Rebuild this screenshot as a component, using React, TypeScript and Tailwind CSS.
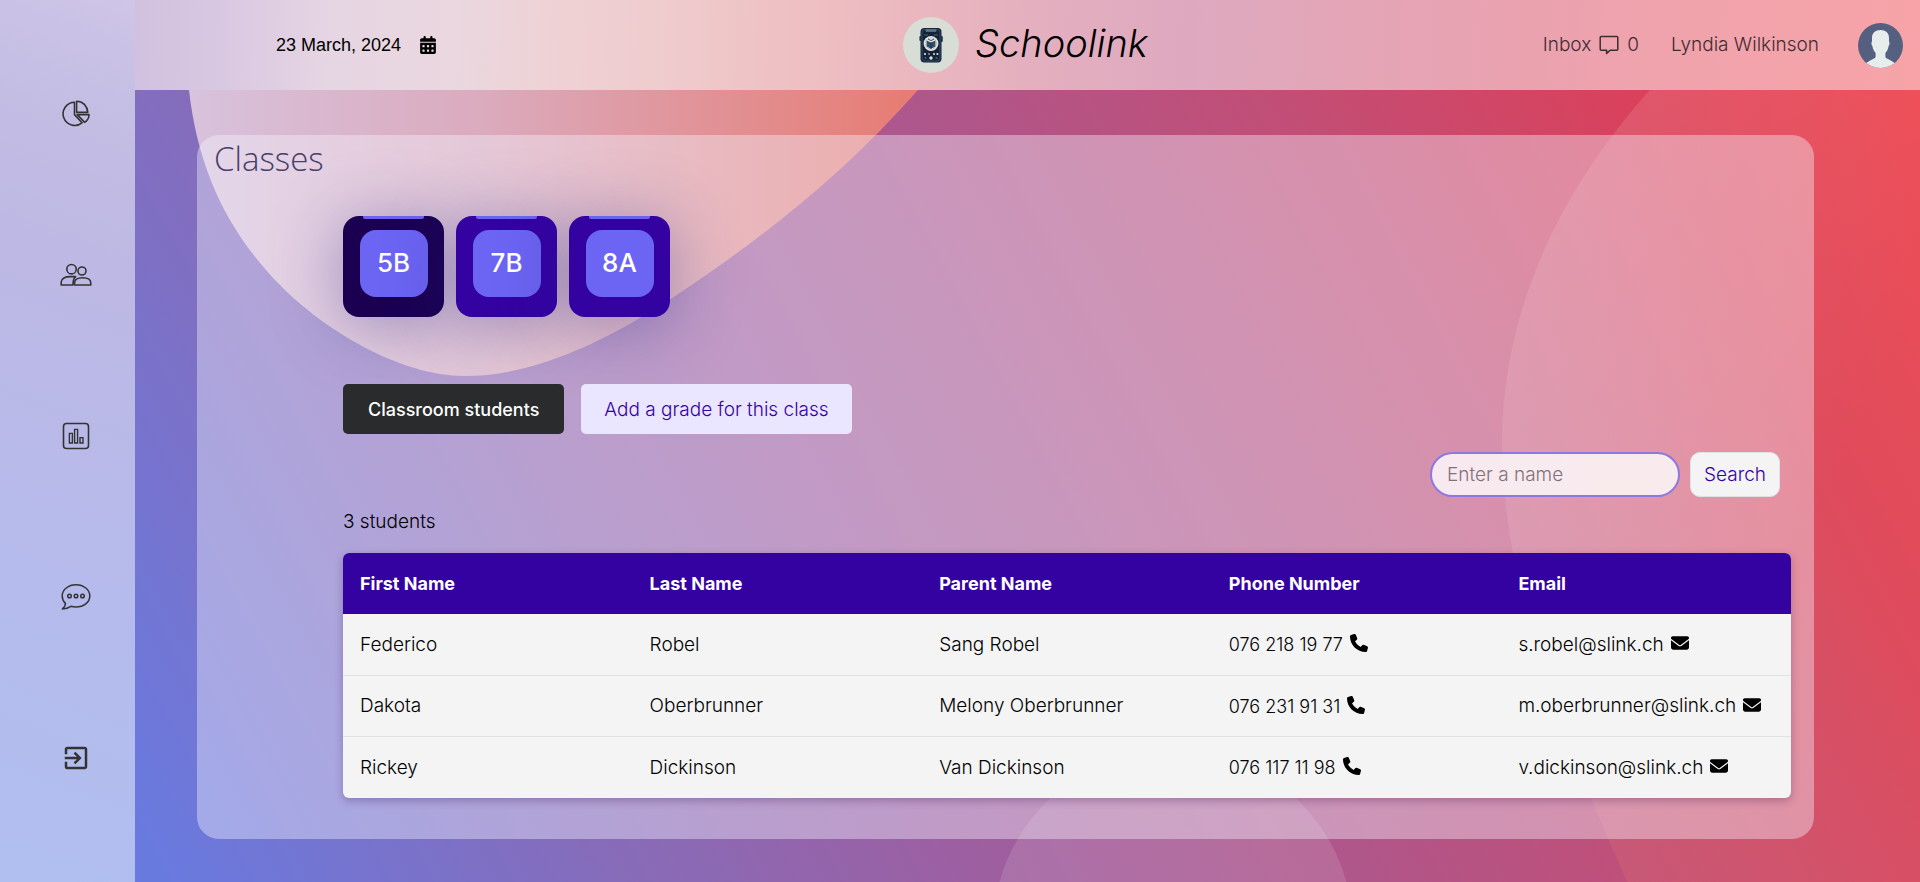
import { useState } from 'react';
import { FaCalendarDays, FaEnvelope, FaPhone } from 'react-icons/fa6';
import { MdExitToApp } from 'react-icons/md';

type Student = { first: string; last: string; parent: string; phone: string; email: string };

const students: Student[] = [
  { first: 'Federico', last: 'Robel', parent: 'Sang Robel', phone: '076 218 19 77', email: 's.robel@slink.ch' },
  { first: 'Dakota', last: 'Oberbrunner', parent: 'Melony Oberbrunner', phone: '076 231 91 31', email: 'm.oberbrunner@slink.ch' },
  { first: 'Rickey', last: 'Dickinson', parent: 'Van Dickinson', phone: '076 117 11 98', email: 'v.dickinson@slink.ch' },
];

const columns = ['First Name', 'Last Name', 'Parent Name', 'Phone Number', 'Email'];

function Backdrop() {
  return (
    <svg
      className="absolute inset-0 h-full w-full"
      viewBox="0 0 1920 882"
      preserveAspectRatio="none"
      aria-hidden="true"
    >
      <defs>
        <linearGradient id="petal" gradientUnits="userSpaceOnUse" x1="190" y1="0" x2="930" y2="0">
          <stop offset="0" stopColor="#d8c2dc" />
          <stop offset="0.4" stopColor="#dbaabd" />
          <stop offset="1" stopColor="#e77a70" />
        </linearGradient>
        <linearGradient id="wave" gradientUnits="userSpaceOnUse" x1="1500" y1="100" x2="1920" y2="300">
          <stop offset="0" stopColor="#fff" stopOpacity="0.13" />
          <stop offset="1" stopColor="#ff8a60" stopOpacity="0.14" />
        </linearGradient>
      </defs>
      <path
        d="M187 0 L189 90 C198 170 228 232 280 285 C324 330 400 376 465 376 C530 376 600 345 669 300 C760 240 840 178 918 90 L990 0 Z"
        fill="url(#petal)"
      />
      <path
        d="M1760 0 C1715 25 1680 55 1650 90 C1560 190 1503 310 1502 440 C1502 590 1565 740 1627 882 L1920 882 L1920 0 Z"
        fill="url(#wave)"
      />
      <circle cx="1173" cy="930" r="180" fill="#fff" fillOpacity="0.12" />
    </svg>
  );
}

function PieIcon() {
  return (
    <svg width="30" height="30" viewBox="0 0 30 30" fill="none" stroke="currentColor" strokeWidth="1.6" strokeLinejoin="round">
      <path d="M13.5 3.2 A11.6 11.6 0 1 0 21 23.8 L13.5 15.6 Z" />
      <path d="M15.6 2.2 C22 2.2 26.2 6.8 26.8 13.4 H15.6 Z" />
      <path d="M16.2 15.6 H28 C28 19 26.4 21.8 23.6 23.4 Z" />
    </svg>
  );
}

function UsersIcon() {
  return (
    <svg width="32" height="24" viewBox="0 0 32 24" fill="none" stroke="currentColor" strokeWidth="1.6" strokeLinejoin="round">
      <circle cx="11.5" cy="6.2" r="4.7" />
      <circle cx="22" cy="8" r="4" />
      <path d="M13 22 H1.2 V19 C1.2 15.5 5.5 13.6 10 13.6 H15.6 C13.6 15.4 13 18 13 22 Z" />
      <path d="M14.5 22 V20 C14.5 16.6 18 14.8 22.8 14.8 C27.6 14.8 30.8 16.6 30.8 20 V22 Z" />
    </svg>
  );
}

function BarsIcon() {
  return (
    <svg width="30" height="30" viewBox="0 0 30 30" fill="none" stroke="currentColor" strokeWidth="1.6">
      <rect x="2.5" y="2.5" width="25" height="25" rx="3" />
      <path d="M8.4 12.4 h3 v9.6 h-3 Z M13.6 8.4 h3 v13.6 h-3 Z M19 16.6 h3 v5.4 h-3 Z" strokeWidth="1.4" />
    </svg>
  );
}

function ChatIcon() {
  return (
    <svg width="30" height="28" viewBox="0 0 30 28" fill="none" stroke="currentColor" strokeWidth="1.5" strokeLinejoin="round">
      <path d="M15 1.8 C22.6 1.8 28.8 6.6 28.8 13 C28.8 19.4 22.6 24 15 24 C13.2 24 11.4 23.8 10 23.3 C7.4 25 4.4 25.9 1.4 25.9 C3.6 24 4.6 22.4 4.4 20.4 C2.4 18.4 1.2 16 1.2 13 C1.2 6.6 7.4 1.8 15 1.8 Z" />
      <circle cx="8.5" cy="13" r="1.8" />
      <circle cx="15" cy="13" r="1.8" />
      <circle cx="21.5" cy="13" r="1.8" />
    </svg>
  );
}

function InboxIcon() {
  return (
    <svg width="20" height="20" viewBox="0 0 20 20" fill="none" stroke="currentColor" strokeWidth="1.5" strokeLinejoin="round">
      <path d="M2.2 1.6 H17.8 Q18.8 1.6 18.8 2.6 V14.2 Q18.8 15.2 17.8 15.2 H11.2 L7.6 18.4 V15.2 H2.2 Q1.2 15.2 1.2 14.2 V2.6 Q1.2 1.6 2.2 1.6 Z" />
    </svg>
  );
}

function Logo() {
  return (
    <svg width="56" height="56" viewBox="0 0 56 56" role="img" aria-label="Schoolink logo">
      <circle cx="28" cy="28" r="28" fill="#d8ddd5" />
      <rect x="16.4" y="19" width="2" height="5" rx="1" fill="#26384e" />
      <rect x="37.8" y="19" width="2" height="6" rx="1" fill="#26384e" />
      <rect x="17.5" y="11" width="21" height="34.5" rx="4" fill="#12233a" />
      <rect x="19" y="12.5" width="18" height="31.5" rx="3" fill="none" stroke="#41566c" strokeWidth="0.8" />
      <path d="M23 12.5 h10 v2 h-10 Z M21 18 h4 M31 18 h4" fill="#5b7186" stroke="#5b7186" strokeWidth="0.8" />
      <circle cx="28" cy="26.5" r="7.4" fill="#e6e6dc" />
      <circle cx="28" cy="26.5" r="5.6" fill="none" stroke="#8895a0" strokeWidth="0.6" strokeDasharray="1.5 1" />
      <path d="M23.6 23.4 L28 25.4 L32.4 23.4 V29.6 L28 31.8 L23.6 29.6 Z" fill="#2f4d6b" />
      <path d="M28 25.4 V31.8 M25 22 l3 1.6 l3 -1.6" stroke="#12233a" strokeWidth="0.8" fill="none" />
      <g fill="#dfe3dc">
        <circle cx="22" cy="37" r="1.1" />
        <circle cx="26" cy="37" r="0.8" />
        <circle cx="31" cy="37" r="1" />
        <circle cx="34.4" cy="37" r="1.1" />
        <circle cx="28" cy="41" r="1.7" />
      </g>
      <circle cx="22.5" cy="41" r="1.1" fill="#4a6075" />
      <circle cx="33.5" cy="41" r="1.1" fill="#4a6075" />
    </svg>
  );
}

function Avatar() {
  return (
    <svg width="45" height="45" viewBox="0 0 45 45" role="img" aria-label="Lyndia Wilkinson">
      <defs>
        <clipPath id="round">
          <circle cx="22.5" cy="22.5" r="22.5" />
        </clipPath>
      </defs>
      <g clipPath="url(#round)">
        <rect width="45" height="45" fill="#556080" />
        <path
          d="M22.5 7 C27.6 7 31 10 31 14.5 V18.5 C32 19.6 31.6 22 30.6 23 C30.2 26.4 28.6 28.4 27.4 30 V34 C28.4 36 33.5 37.4 37.5 40.5 V45 H7.5 V40.5 C11.5 37.4 16.6 36 17.6 34 V30 C16.4 28.4 14.8 26.4 14.4 23 C13.4 22 13 19.6 14 18.5 V14.5 C14 10 17.4 7 22.5 7 Z"
          fill="#e7eced"
        />
      </g>
    </svg>
  );
}

const navItems = [
  { label: 'Dashboard', icon: <PieIcon /> },
  { label: 'Classes', icon: <UsersIcon /> },
  { label: 'Grades', icon: <BarsIcon /> },
  { label: 'Messages', icon: <ChatIcon /> },
  { label: 'Log out', icon: <MdExitToApp size={30} /> },
];

export default function App() {
  const [activeClass, setActiveClass] = useState('5B');
  const [query, setQuery] = useState('');

  return (
    <div className="relative flex min-h-screen bg-[linear-gradient(62deg,#6679e2_0%,#697adf_7%,#886bb8_27%,#9d5fa1_41%,#b0568a_57%,#c24e76_71%,#da415b_86%,#ee4452_100%)] font-['Inter','Liberation_Sans',sans-serif] text-[19px] font-light text-black">
      <Backdrop />

      <nav
        aria-label="Main"
        className="relative flex w-[135px] shrink-0 flex-col bg-[linear-gradient(20deg,#b0bff0_0%,#b5bbec_35%,#bdb8e4_68%,#c3bde4_85%,#cec5e7_100%)] pt-[34px] pb-11"
      >
        {navItems.map((item) => (
          <a
            key={item.label}
            href="#"
            aria-label={item.label}
            className="flex flex-1 items-center justify-center pl-4 text-[#333]"
          >
            {item.icon}
          </a>
        ))}
      </nav>

      <div className="relative flex min-w-0 flex-1 flex-col">
        <header className="grid h-[90px] grid-cols-3 items-center bg-[linear-gradient(92deg,#d1c1df_0%,#d9c8e1_5%,#e6d5e3_11%,#ead7df_18%,#efd1d4_24%,#efcbcd_30%,#eec0c3_37%,#ebb8c0_43%,#e4b0bf_50%,#dea9bf_59%,#e2a6b8_66%,#eaa2b0_77%,#f0a3ac_86%,#f7a3a8_100%)]">
          <div className="flex items-center gap-[18px] pl-[141px] font-['Liberation_Sans',Arial,sans-serif] text-lg">
            <span>23 March, 2024</span>
            <FaCalendarDays size={18} />
          </div>
          <div className="flex items-center justify-center gap-4 pr-1">
            <Logo />
            <span className="pb-1 text-[38px] leading-[46px] italic">Schoolink</span>
          </div>
          <div className="flex items-center justify-end pr-[17px] text-[#3f2c33]">
            <a href="#" className="flex items-center gap-2">
              Inbox <InboxIcon /> 0
            </a>
            <span className="ml-8">Lyndia Wilkinson</span>
            <span className="ml-[39px]">
              <Avatar />
            </span>
          </div>
        </header>

        <main className="mt-[45px] mr-[106px] mb-[43px] ml-[62px] flex-1 rounded-[22px] bg-[#f5f5ff]/40">
          <h1 className="px-[17px] pt-[3px] font-['Open_Sans','Noto_Sans',sans-serif] text-[33px] leading-[42px] font-light text-[#47406b]">
            Classes
          </h1>

          <div className="pr-[23px] pl-[146px]">
            <div className="mt-9 flex gap-3">
              {['5B', '7B', '8A'].map((name) => (
                <button
                  key={name}
                  type="button"
                  onClick={() => setActiveClass(name)}
                  className={`flex h-[101px] w-[101px] flex-col items-center rounded-2xl shadow-[0_8px_70px_rgba(31,38,135,0.4)] ${
                    activeClass === name ? 'bg-[#1b0052]' : 'bg-[#3502a2]'
                  }`}
                >
                  <span className="h-[3px] w-[61px] rounded-b-xs bg-[#6c63f0]" />
                  <span className="mt-[11px] flex h-[67px] w-[68px] items-center justify-center rounded-2xl bg-[#6c64f2] pb-[2px] text-[26px] font-medium text-white">
                    {name}
                  </span>
                </button>
              ))}
            </div>

            <div className="mt-[67px] flex gap-[17px]">
              <button type="button" className="h-[50px] rounded-[5px] bg-[#292b2c] px-[25px] pt-[2px] text-lg font-medium text-white">
                Classroom students
              </button>
              <button type="button" className="h-[50px] rounded-[5px] bg-[#eae6ff] px-[23px] pt-[2px] text-[#3502a2]">
                Add a grade for this class
              </button>
            </div>

            <form className="mt-[18px] mr-[11px] flex justify-end gap-[10px]" onSubmit={(e) => e.preventDefault()}>
              <input
                type="search"
                aria-label="Enter a name"
                placeholder="Enter a name"
                value={query}
                onChange={(e) => setQuery(e.target.value)}
                className="h-[45px] w-[250px] rounded-full border-2 border-[#8c78e0] bg-white/80 px-[15px] outline-none placeholder:text-[#83717a]"
              />
              <button type="submit" className="h-[45px] rounded-[10px] border border-[#dee2e6] bg-[#f4f4f4] px-[13px] pt-[2px] text-[#3502a2]">
                Search
              </button>
            </form>

            <p className="mt-3 leading-[26px]">3 students</p>

            <table className="mt-[18px] w-full table-fixed overflow-hidden rounded-md bg-[#f4f4f4] text-left shadow-[0_3px_8px_rgba(60,20,80,0.3)]">
              <thead className="bg-[#3502a2] text-lg text-white">
                <tr>
                  {columns.map((c) => (
                    <th key={c} scope="col" className="h-[61px] px-[17px] font-bold">
                      {c}
                    </th>
                  ))}
                </tr>
              </thead>
              <tbody>
                {students.map((s) => (
                  <tr key={s.email} className="h-[61px] border-b border-[#dee2e6] last:h-[62px] last:border-b-0">
                    <td className="px-[17px] pt-[2px]">{s.first}</td>
                    <td className="px-[17px] pt-[2px]">{s.last}</td>
                    <td className="px-[17px] pt-[2px]">{s.parent}</td>
                    <td className="px-[17px] pt-[2px] text-lg">
                      <a href="#" className="flex items-center gap-[7px]">
                        {s.phone}
                        <FaPhone size={18} className="mb-1 shrink-0" />
                      </a>
                    </td>
                    <td className="pt-[2px] pl-[17px]">
                      <a href="#" className="flex items-center gap-[7px]">
                        {s.email}
                        <FaEnvelope size={18} className="mb-1 shrink-0" />
                      </a>
                    </td>
                  </tr>
                ))}
              </tbody>
            </table>
          </div>
        </main>
      </div>
    </div>
  );
}
